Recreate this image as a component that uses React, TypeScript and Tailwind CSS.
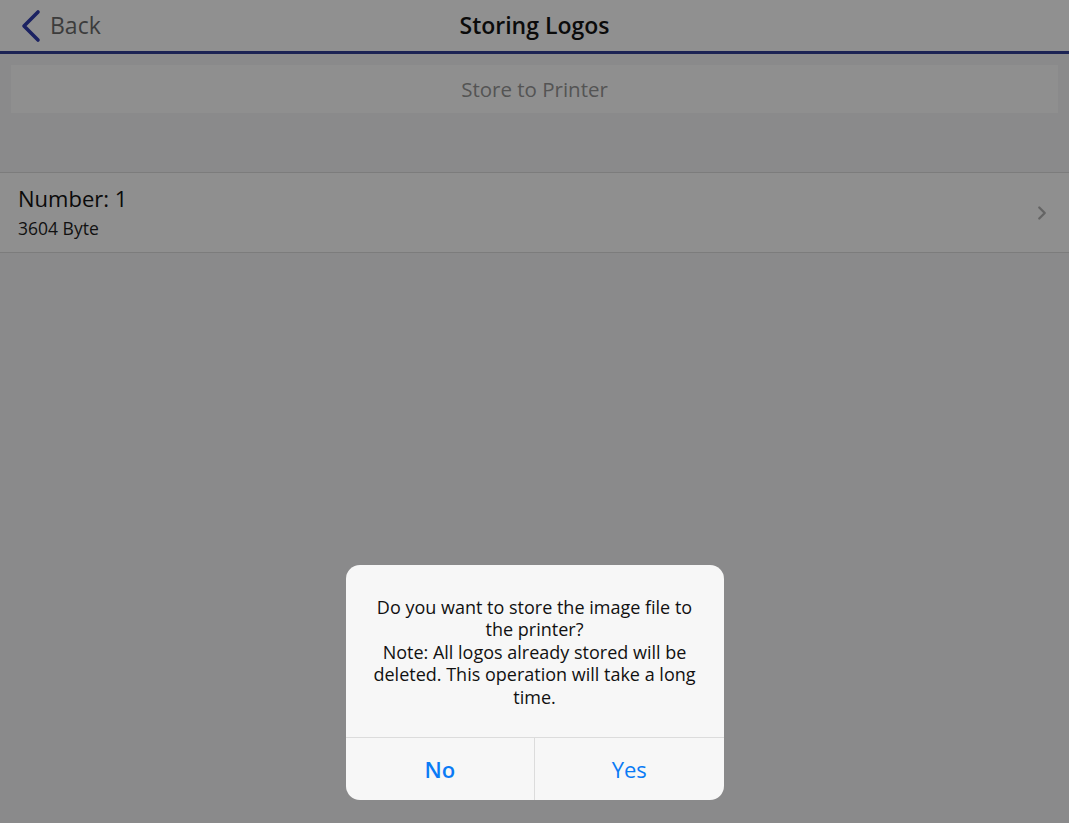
import { ChevronRight } from 'lucide-react';

const font = { fontFamily: '"Open Sans", "Liberation Sans", sans-serif' };

function NavBar() {
    return (
        <div className="relative flex h-[51px] items-center justify-center bg-[#909090]">
            <div className="absolute left-0 top-0 flex h-full items-center pl-[19px]">
                <svg width="24" height="34" viewBox="0 0 24 34" fill="none">
                    <polyline points="19,3 5,17 19,31" stroke="#1b2262" strokeWidth="3.6" strokeLinecap="round" strokeLinejoin="round" />
                </svg>
                <span className="ml-[7px] text-[23px] text-[#3c3c3c]">Back</span>
            </div>
            <h1 className="text-[23px] font-semibold text-[#0b0b0b]">Storing Logos</h1>
        </div>
    );
}

function LogoRow() {
    return (
        <div className="flex h-[81px] items-center justify-between border-y border-[#7c7c7c] bg-[#8f8f8f] pl-[18px] pr-[16px]">
            <div className="-mt-[2px]">
                <div className="text-[22px] leading-[28px] text-[#0a0a0a]">Number: 1</div>
                <div className="mt-[5px] text-[17.5px] leading-[22px] text-[#111]">3604 Byte</div>
            </div>
            <ChevronRight className="h-[22px] w-[22px] text-[#646464]" strokeWidth={2.5} />
        </div>
    );
}

function Alert() {
    return (
        <div className="w-[378px] overflow-hidden rounded-[14px] bg-[#f7f7f7]">
            <p className="whitespace-nowrap px-[4px] pt-[31px] pb-[29px] text-center text-[18px] leading-[22.5px] text-[#111]">
                Do you want to store the image file to
                <br />
                the printer?
                <br />
                Note: All logos already stored will be
                <br />
                deleted. This operation will take a long
                <br />
                time.
            </p>
            <div className="flex h-[63px] border-t border-[#dcdcdc]">
                <button className="flex-1 border-r border-[#dcdcdc] text-[22px] font-semibold text-[#0a7bf5]">No</button>
                <button className="flex-1 text-[22px] text-[#0a7bf5]">Yes</button>
            </div>
        </div>
    );
}

export default function App() {
    return (
        <div className="relative h-[823px] w-[1069px] overflow-hidden bg-[#8a8a8b]" style={font}>
            <NavBar />
            <div className="h-[3px] bg-[#1c2354]" />
            <div className="px-[11px] pt-[11px]">
                <div className="flex h-[48px] items-center justify-center bg-[#8f8f8f] text-[20.5px] text-[#545454]">
                    Store to Printer
                </div>
            </div>
            <div className="h-[59px]" />
            <LogoRow />

            {/* alert overlay */}
            <div className="absolute inset-0 flex items-end justify-center pb-[23px]">
                <Alert />
            </div>
        </div>
    );
}
